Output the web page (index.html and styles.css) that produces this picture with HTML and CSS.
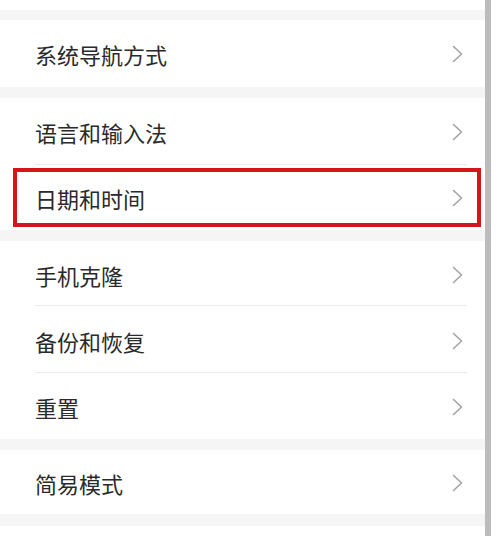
FILE: index.html
```html
<!DOCTYPE html>
<html lang="zh-CN">
<head>
    <meta charset="UTF-8">
    <title>系统设置</title>
    <link rel="stylesheet" href="styles.css">
</head>
<body>
    <div class="screen">
        <div class="list">
            <div class="cap"></div>
            <div class="gap"></div>

            <div class="group">
                <div class="row r67">
                    <span class="label">系统导航方式</span>
                    <svg class="chevron" viewBox="0 0 11 18"><polyline points="1.5,1.5 9.5,9 1.5,16.5"/></svg>
                </div>
            </div>
            <div class="gap g11"></div>

            <div class="group">
                <div class="row r67 line">
                    <span class="label">语言和输入法</span>
                    <svg class="chevron" viewBox="0 0 11 18"><polyline points="1.5,1.5 9.5,9 1.5,16.5"/></svg>
                </div>
                <div class="row r65">
                    <span class="label">日期和时间</span>
                    <svg class="chevron" viewBox="0 0 11 18"><polyline points="1.5,1.5 9.5,9 1.5,16.5"/></svg>
                    <div class="highlight"></div>
                </div>
            </div>
            <div class="gap g12"></div>

            <div class="group">
                <div class="row r65 line">
                    <span class="label">手机克隆</span>
                    <svg class="chevron" viewBox="0 0 11 18"><polyline points="1.5,1.5 9.5,9 1.5,16.5"/></svg>
                </div>
                <div class="row r67 line">
                    <span class="label">备份和恢复</span>
                    <svg class="chevron" viewBox="0 0 11 18"><polyline points="1.5,1.5 9.5,9 1.5,16.5"/></svg>
                </div>
                <div class="row r66">
                    <span class="label">重置</span>
                    <svg class="chevron" viewBox="0 0 11 18"><polyline points="1.5,1.5 9.5,9 1.5,16.5"/></svg>
                </div>
            </div>
            <div class="gap g11"></div>

            <div class="group">
                <div class="row r64">
                    <span class="label">简易模式</span>
                    <svg class="chevron" viewBox="0 0 11 18"><polyline points="1.5,1.5 9.5,9 1.5,16.5"/></svg>
                </div>
            </div>
            <div class="gap g12"></div>
            <div class="cap"></div>
        </div>
        <div class="scrollbar"></div>
        <div class="edge"></div>
    </div>
</body>
</html>
```

FILE: styles.css
```css
body {
    margin: 0;
    background-color: #fff;
    font-family: 'Noto Sans CJK SC', 'Noto Sans', sans-serif;
}

.screen {
    display: flex;
    width: 500px;
    height: 536px;
    overflow: hidden;
}

.list {
    width: 485px;
    display: flex;
    flex-direction: column;
}

.cap {
    height: 10px;
    background-color: #fff;
}

.gap {
    height: 10px;
    background-color: #f5f5f5;
}

.gap.g11 {
    height: 11px;
}

.gap.g12 {
    height: 12px;
}

.group {
    background-color: #fff;
}

.row {
    position: relative;
    display: flex;
    align-items: center;
    justify-content: space-between;
    padding: 0 22px 0 35px;
    box-sizing: border-box;
}

.row.r64 { height: 64px; }
.row.r65 { height: 65px; }
.row.r66 { height: 66px; }
.row.r67 { height: 67px; }

.row.line::after {
    content: '';
    position: absolute;
    left: 35px;
    right: 18px;
    bottom: 0;
    height: 1px;
    background-color: #ececec;
}

.label {
    font-size: 22px;
    color: #2a2a2a;
    padding-top: 2px;
}

.chevron {
    width: 11px;
    height: 18px;
    margin-top: 2px;
    fill: none;
    stroke: #a3a3a3;
    stroke-width: 1.6;
    stroke-linecap: round;
    stroke-linejoin: round;
}

.highlight {
    position: absolute;
    top: 3px;
    bottom: 3px;
    left: 13px;
    right: 4px;
    border: 4px solid #d5141c;
}

.scrollbar {
    width: 6px;
    background-color: #bcbcbc;
}

.edge {
    flex: 1;
    background-color: #fff;
}
```
